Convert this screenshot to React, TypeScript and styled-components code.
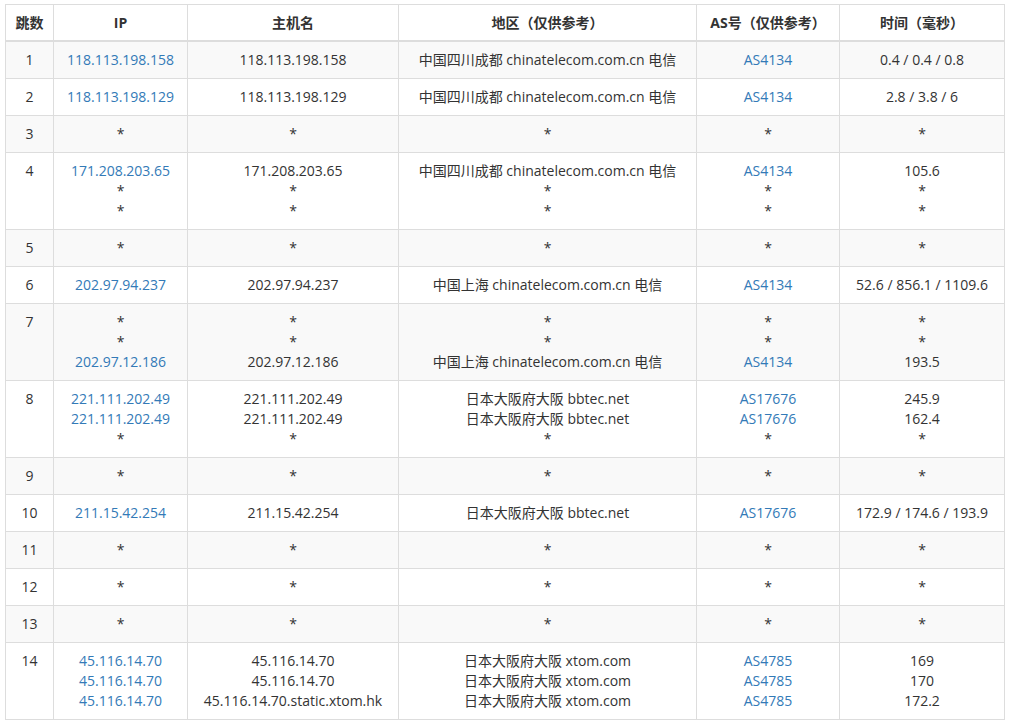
import React from "react";
import styled, { createGlobalStyle } from "styled-components";

const Global = createGlobalStyle`
  body { margin: 0; background: #fff; font-family: "Open Sans", "Noto Sans CJK SC", sans-serif; font-size: 14px; color: #333; }
`;
const Wrap = styled.div` padding: 4px 5px 0 5px; `;
const Table = styled.table`
  border-collapse: collapse; width: 999px; table-layout: fixed;
`;
const Col = styled.col<{ $w: number }>` width: ${p => p.$w}px; `;
const Th = styled.th`
  border: 1px solid #ddd; border-bottom: 2px solid #ddd; height: 35px; padding: 0 4px;
  font-weight: bold; text-align: center; line-height: 20px; color: #333;
`;
const Tr = styled.tr<{ $odd: boolean }>` background: ${p => (p.$odd ? "#f9f9f9" : "#fff")}; `;
const Td = styled.td`
  border: 1px solid #ddd; padding: 8px 4px; line-height: 20px; text-align: center;
  vertical-align: top; color: #333; white-space: nowrap;
`;
const Line = styled.div<{ $link: boolean }>` color: ${p => (p.$link ? "#337ab7" : "#333")}; `;

const S = "*";
const CT = "中国四川成都 chinatelecom.com.cn 电信";
const SH = "中国上海 chinatelecom.com.cn 电信";
const OS = "日本大阪府大阪 bbtec.net";
const XT = "日本大阪府大阪 xtom.com";
const star = [[S], [S], [S], [S], [S]];
const rows: string[][][] = [
  [["118.113.198.158"], ["118.113.198.158"], [CT], ["AS4134"], ["0.4 / 0.4 / 0.8"]],
  [["118.113.198.129"], ["118.113.198.129"], [CT], ["AS4134"], ["2.8 / 3.8 / 6"]],
  star,
  [["171.208.203.65", S, S], ["171.208.203.65", S, S], [CT, S, S], ["AS4134", S, S], ["105.6", S, S]],
  star,
  [["202.97.94.237"], ["202.97.94.237"], [SH], ["AS4134"], ["52.6 / 856.1 / 1109.6"]],
  [[S, S, "202.97.12.186"], [S, S, "202.97.12.186"], [S, S, SH], [S, S, "AS4134"], [S, S, "193.5"]],
  [["221.111.202.49", "221.111.202.49", S], ["221.111.202.49", "221.111.202.49", S], [OS, OS, S], ["AS17676", "AS17676", S], ["245.9", "162.4", S]],
  star,
  [["211.15.42.254"], ["211.15.42.254"], [OS], ["AS17676"], ["172.9 / 174.6 / 193.9"]],
  star, star, star,
  [["45.116.14.70", "45.116.14.70", "45.116.14.70"], ["45.116.14.70", "45.116.14.70", "45.116.14.70.static.xtom.hk"], [XT, XT, XT], ["AS4785", "AS4785", "AS4785"], ["169", "170", "172.2"]],
];
const widths = [48, 134, 211, 298, 143, 165];
const heads = ["跳数", "IP", "主机名", "地区（仅供参考）", "AS号（仅供参考）", "时间（毫秒）"];

export default function App() {
  return (
    <Wrap>
      <Global />
      <Table>
        <colgroup>
          {widths.map((w, i) => <Col key={i} $w={w} />)}
        </colgroup>
        <thead>
          <tr>{heads.map(h => <Th key={h}>{h}</Th>)}</tr>
        </thead>
        <tbody>
          {rows.map((r, i) => (
            <Tr key={i} $odd={i % 2 === 0}>
              <Td>{i + 1}</Td>
              {r.map((c, j) => (
                <Td key={j}>
                  {c.map((l, k) => (
                    <Line key={k} $link={(j === 0 || j === 3) && l !== S}>{l}</Line>
                  ))}
                </Td>
              ))}
            </Tr>
          ))}
        </tbody>
      </Table>
    </Wrap>
  );
}
